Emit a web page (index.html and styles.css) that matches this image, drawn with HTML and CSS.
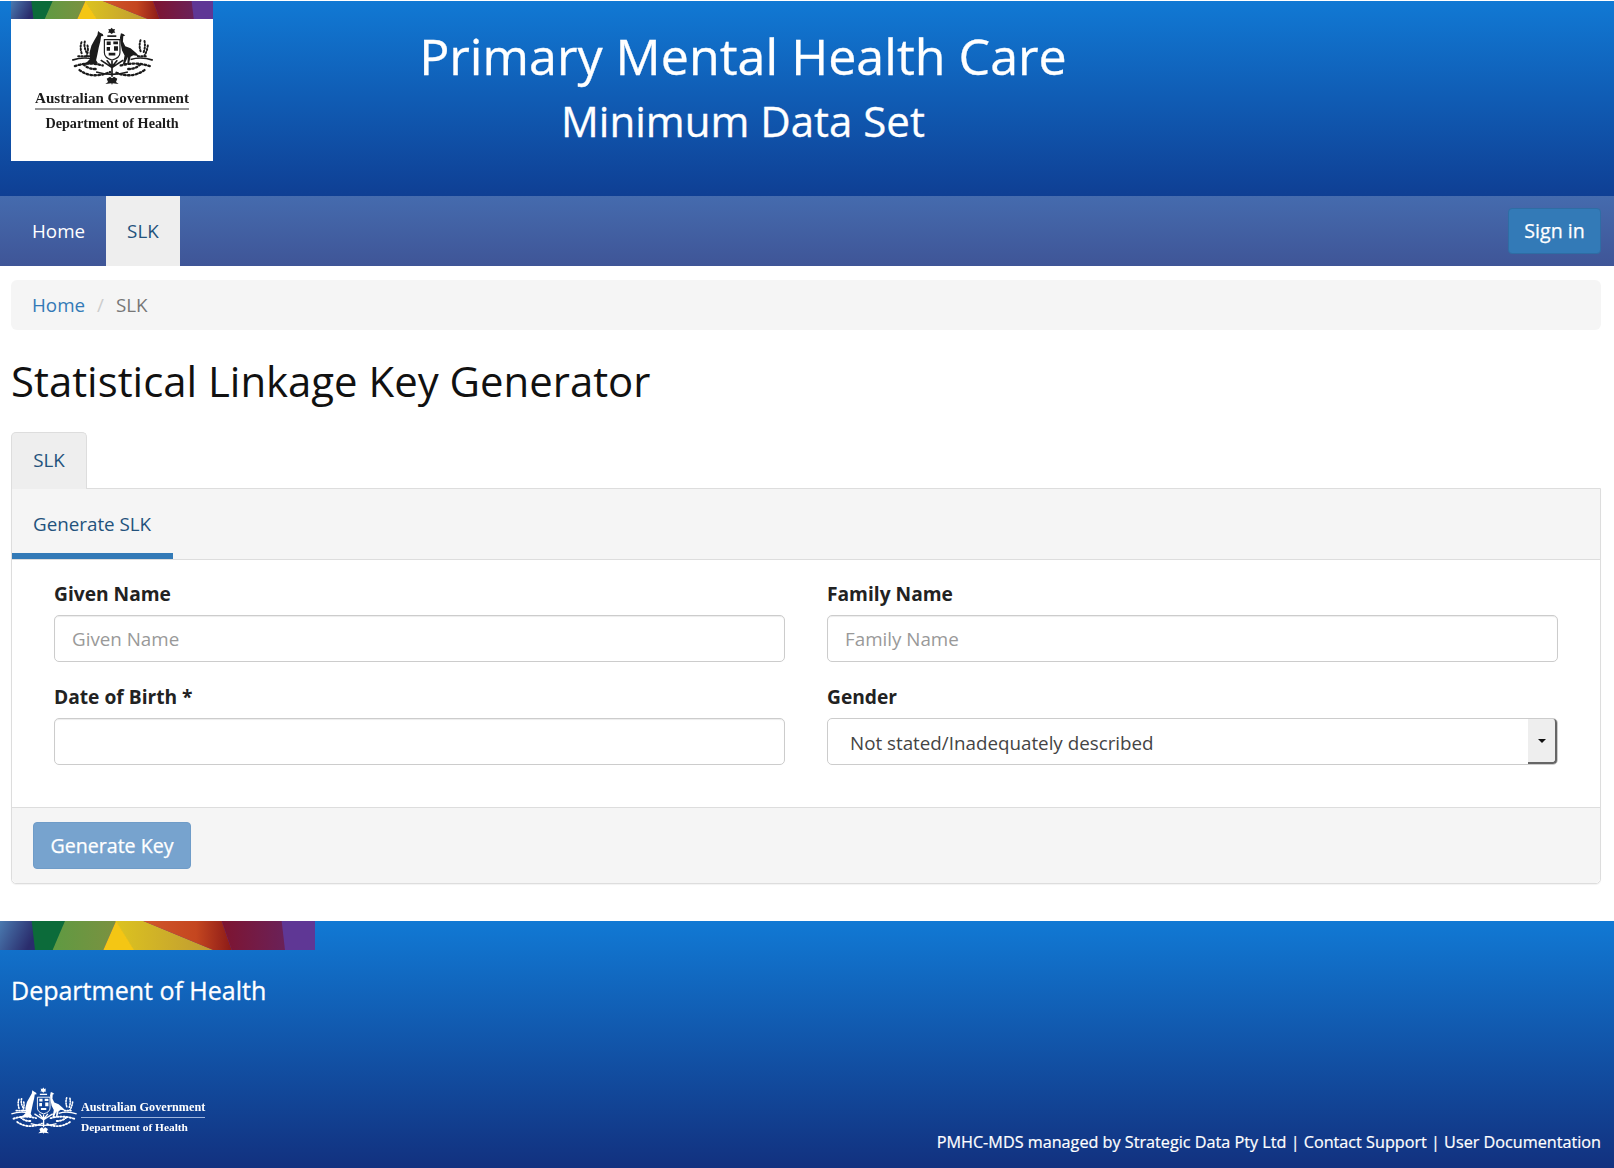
FILE: index.html
```html
<!DOCTYPE html>
<html lang="en">
<head>
<meta charset="utf-8">
<title>Statistical Linkage Key Generator</title>
<link rel="stylesheet" href="styles.css">
</head>
<body>
<svg class="defs" aria-hidden="true">
  <defs>
    <linearGradient id="g-blue" x1="0" y1="0" x2="1" y2="0.4"><stop offset="0" stop-color="#4a7ab0"/><stop offset="1" stop-color="#2a2c6c"/></linearGradient>
    <linearGradient id="g-lime" x1="0" y1="0" x2="1" y2="0"><stop offset="0" stop-color="#5f9a42"/><stop offset="1" stop-color="#7b9140"/></linearGradient>
    <linearGradient id="g-gold" x1="0" y1="0" x2="1" y2="0"><stop offset="0" stop-color="#dcc31f"/><stop offset="1" stop-color="#bf9a33"/></linearGradient>
    <linearGradient id="g-red" x1="0" y1="0" x2="1" y2="0"><stop offset="0" stop-color="#d2572a"/><stop offset="0.6" stop-color="#c4461f"/><stop offset="1" stop-color="#8c1a18"/></linearGradient>
    <linearGradient id="g-wine" x1="0" y1="0" x2="1" y2="0"><stop offset="0" stop-color="#7e1430"/><stop offset="1" stop-color="#6a2158"/></linearGradient>
    <symbol id="rainbow" viewBox="0 0 945 87" preserveAspectRatio="none">
      <rect width="945" height="87" fill="#5f3795"/>
      <polygon points="0,0 100,0 106,87 0,87" fill="url(#g-blue)"/>
      <polygon points="95,0 197,0 160,87 105,87" fill="#0c6b3a"/>
      <polygon points="195,0 348,0 310,87 158,87" fill="url(#g-lime)"/>
      <polygon points="346,0 430,0 640,87 400,87" fill="url(#g-gold)"/>
      <polygon points="348,0 402,87 310,87" fill="#f4c614"/>
      <polygon points="430,0 665,0 695,87 640,87" fill="url(#g-red)"/>
      <polygon points="665,0 845,0 855,87 695,87" fill="url(#g-wine)"/>
    </symbol>
    <symbol id="crest" viewBox="0 0 243 175">
      <path fill="currentColor" d="M78 12 84 17 92 21 94 27 87 28 85 42 80 62 76 82 72 100 78 110 62 112 44 113 18 116 44 106 54 96 52 78 58 56 68 38 76 24Z"/>
      <path fill="currentColor" d="M147 19 154 21 160 26 154 28 153 44 160 58 176 64 192 78 202 88 184 85 176 90 172 108 178 112 166 112 168 90 160 108 164 112 153 112 158 86 150 70 146 50 144 32Z"/>
      <path fill="currentColor" d="M119 2 123 7 129 6 127 12 130 17 124 17 119 21 114 17 108 17 111 12 109 6 115 7Z"/>
      <rect x="106" y="25" width="27" height="5" fill="currentColor"/>
      <path fill="none" stroke="currentColor" stroke-width="3.5" d="M97 38H144V78Q144 94 120 100 97 94 97 78Z"/>
      <path fill="currentColor" d="M104 44h12v10h-12zM124 44h14v8h-14zM104 60h10v12h-10zM126 58h12v14h-12zM110 78h20v8h-20z"/>
      <path fill="none" stroke="currentColor" stroke-width="6" stroke-linecap="round" stroke-dasharray="4 6" d="M28 46Q22 62 30 84M38 44Q34 60 44 78M46 56Q50 72 42 90M18 88H62M198 88H226M206 40Q200 58 208 78M218 42Q222 60 214 80M228 56Q226 72 218 86"/>
      <path fill="none" stroke="currentColor" stroke-width="5" d="M0 100Q36 88 66 98M176 98Q208 88 243 100"/>
      <path fill="none" stroke="currentColor" stroke-width="7" stroke-linecap="round" stroke-dasharray="5 7" d="M8 118Q46 104 92 116M234 118Q192 104 146 116M22 130Q60 158 114 136M218 130Q178 158 128 136M34 112Q50 130 78 126M206 112Q188 130 162 126"/>
      <path fill="none" stroke="currentColor" stroke-width="5" d="M86 100 120 122 154 100M104 100 120 120 136 100M120 102V150M72 136Q120 150 168 136"/>
      <path fill="currentColor" d="M104 156 114 150 120 155 126 150 136 156 132 166 140 172 122 170 120 175 118 170 100 172 108 166Z"/>
    </symbol>
  </defs>
</svg>

<header class="site-header">
  <div class="logo">
    <svg class="logo-strip"><use href="#rainbow"/></svg>
    <div class="logo-body">
      <svg class="logo-crest"><use href="#crest"/></svg>
      <div class="logo-gov">Australian Government</div>
      <div class="logo-dept">Department of Health</div>
    </div>
  </div>
  <div class="site-title">
    <div class="site-title-main">Primary Mental Health Care</div>
    <div class="site-title-sub">Minimum Data Set</div>
  </div>
</header>

<nav class="navbar">
  <a class="nav-item" href="#">Home</a>
  <a class="nav-item is-active" href="#">SLK</a>
  <a class="btn btn-signin" href="#">Sign in</a>
</nav>

<main class="content">
  <ol class="breadcrumb">
    <li><a href="#">Home</a></li>
    <li class="crumb-sep">/</li>
    <li class="crumb-current">SLK</li>
  </ol>

  <h1 class="page-title">Statistical Linkage Key Generator</h1>

  <div class="tabs"><a class="tab" href="#">SLK</a></div>

  <section class="panel">
    <div class="subtabs"><a class="subtab" href="#">Generate SLK</a></div>
    <form class="form-grid">
      <div class="field">
        <label class="field-label">Given Name</label>
        <input class="input" type="text" placeholder="Given Name">
      </div>
      <div class="field">
        <label class="field-label">Family Name</label>
        <input class="input" type="text" placeholder="Family Name">
      </div>
      <div class="field">
        <label class="field-label">Date of Birth *</label>
        <input class="input" type="text">
      </div>
      <div class="field">
        <label class="field-label">Gender</label>
        <div class="select">
          <span class="select-value">Not stated/Inadequately described</span>
          <span class="select-arrow"><span class="caret"></span></span>
        </div>
      </div>
    </form>
    <div class="panel-footer">
      <button class="btn btn-generate" type="button">Generate Key</button>
    </div>
  </section>
</main>

<footer class="site-footer">
  <svg class="footer-strip"><use href="#rainbow"/></svg>
  <div class="footer-dept">Department of Health</div>
  <div class="footer-bottom">
    <div class="footer-logo">
      <svg class="footer-crest"><use href="#crest"/></svg>
      <div class="footer-logo-text">
        <div class="footer-gov">Australian Government</div>
        <div class="footer-dept-small">Department of Health</div>
      </div>
    </div>
    <div class="footer-links">PMHC-MDS managed by Strategic Data Pty Ltd | Contact Support | User Documentation</div>
  </div>
</footer>
</body>
</html>
```

FILE: styles.css
```css
* { box-sizing: border-box; }
html, body { margin: 0; padding: 0; }
body {
  padding-top: 1px;
  background: #fff;
  color: #333;
  font-family: "Open Sans", "Noto Sans", sans-serif;
  font-size: 18.8px;
  line-height: 1.43;
}
a { text-decoration: none; color: #337ab7; }
.defs { display: block; width: 0; height: 0; overflow: hidden; }

/* Header */
.site-header {
  height: 195px;
  padding-left: 11px;
  display: flex;
  align-items: flex-start;
  background: linear-gradient(#1179d4, #0f3f94);
}
.logo { width: 202px; height: 160px; display: flex; flex-direction: column; background: #fff; }
.logo-strip { display: block; width: 202px; height: 18px; flex: none; }
.logo-body { flex: 1; display: flex; flex-direction: column; align-items: center; color: #1c1c1c; font-family: "Liberation Serif", serif; font-weight: 700; }
.logo-crest { display: block; width: 81px; height: 58px; margin-top: 8px; filter: blur(.45px); }
.logo-gov { font-size: 15.1px; line-height: 18px; margin-top: 4px; padding: 0 0 1px; border-bottom: 2px solid #999; white-space: nowrap; filter: blur(.3px); }
.logo-dept { font-size: 14.2px; line-height: 18px; margin-top: 4px; white-space: nowrap; filter: blur(.3px); }
.site-title { width: 1060px; text-align: center; color: #fff; -webkit-text-stroke: .3px #fff; }
.site-title-main { font-size: 50.2px; line-height: 64px; margin-top: 23px; }
.site-title-sub { font-size: 42px; line-height: 56px; margin-top: 5px; }

/* Navbar */
.navbar {
  height: 70px;
  padding: 0 13px 0 11px;
  display: flex;
  align-items: stretch;
  background: linear-gradient(#456bae, #3f5597);
}
.nav-item { display: flex; align-items: center; padding: 1px 21px 0; color: #fff; }
.nav-item.is-active { background: #eee; color: #23527c; }
.btn { border: 1px solid transparent; border-radius: 4px; color: #fff; font: inherit; font-size: 19.6px; display: inline-flex; align-items: center; justify-content: center; white-space: nowrap; -webkit-text-stroke: .25px #fff; }
.btn-signin { margin: 12px 0 12px auto; padding: 0; width: 93px; background: #337ab7; border-color: #2e6da4; }

/* Content */
.content { padding: 14px 13px 37px 11px; }
.breadcrumb { list-style: none; margin: 0; height: 50px; padding: 1px 21px 0; display: flex; align-items: center; gap: 12px; background: #f5f5f5; border-radius: 6px; }
.crumb-sep { color: #ccc; }
.crumb-current { color: #777; }
.page-title { margin: 25px 0 0; height: 77px; font-size: 41.9px; font-weight: 400; line-height: 52px; color: #111; }

.tabs { display: flex; height: 56px; }
.tab { width: 76px; height: 57px; padding-bottom: 2px; display: flex; align-items: center; justify-content: center; background: #eee; border: 1px solid #ddd; border-bottom: 0; border-radius: 5px 5px 0 0; color: #23527c; position: relative; z-index: 1; }

.panel { border: 1px solid #ddd; border-radius: 0 0 5px 5px; height: 396px; display: flex; flex-direction: column; box-shadow: 0 1px 1px rgba(0,0,0,.05); }
.subtabs { height: 71px; flex: none; background: #f5f5f5; border-bottom: 1px solid #ddd; }
.subtab { display: flex; align-items: center; width: 161px; height: 70px; padding-left: 21px; padding-top: 7px; border-bottom: 6px solid #337ab7; color: #23527c; }

.form-grid { flex: 1; padding: 21px 42px 0; display: grid; grid-template-columns: 1fr 1fr; column-gap: 42px; row-gap: 22px; align-content: start; }
.field { display: flex; flex-direction: column; }
.field-label { font-weight: 700; font-size: 19.2px; line-height: 25px; margin-bottom: 9px; color: #222; }
.input { width: 100%; height: 47px; padding: 0 17px; border: 1px solid #ccc; border-radius: 5px; font: inherit; color: #555; background: #fff; box-shadow: inset 0 1px 1px rgba(0,0,0,.075); }
.input::placeholder { color: #999; opacity: 1; }
.select { height: 47px; display: flex; align-items: stretch; border: 1px solid #ccc; border-radius: 5px; color: #444; background: #fff; }
.select-value { flex: 1; display: flex; align-items: center; padding: 3px 0 0 22px; }
.select-arrow { width: 29px; display: flex; align-items: center; justify-content: center; background: #eee; border-right: 2px solid #666; border-bottom: 2px solid #666; border-radius: 0 4px 4px 0; }
.caret { width: 0; height: 0; border-left: 4px solid transparent; border-right: 4px solid transparent; border-top: 4px solid #111; }

.panel-footer { height: 76px; flex: none; padding: 14px 21px 0; background: #f5f5f5; border-top: 1px solid #ddd; border-radius: 0 0 5px 5px; }
.btn-generate { width: 158px; height: 47px; padding: 2px 0 0; background: #77a3ce; border-color: #6f9cc8; }

/* Footer */
.site-footer { height: 247px; display: flex; flex-direction: column; background: linear-gradient(#1179d4, #12317f); color: #fff; }
.footer-strip { display: block; width: 315px; height: 29px; flex: none; }
.footer-dept { font-size: 25px; line-height: 34px; margin: 23px 0 0 11px; -webkit-text-stroke: .3px #fff; }
.footer-bottom { margin-top: auto; padding: 0 13px 0 11px; display: flex; justify-content: space-between; align-items: flex-end; }
.footer-logo { display: flex; align-items: flex-start; gap: 4px; margin-bottom: 33px; }
.footer-crest { display: block; width: 66px; height: 47px; filter: blur(.4px); }
.footer-logo-text { margin-top: 13px; font-family: "Liberation Serif", serif; font-weight: 700; white-space: nowrap; filter: blur(.3px); }
.footer-gov { font-size: 12.2px; line-height: 15px; border-bottom: 1px solid #9db4dc; padding-bottom: 2px; }
.footer-dept-small { font-size: 11.4px; line-height: 16px; margin-top: 1px; }
.footer-links { font-size: 16.2px; line-height: 24px; padding-bottom: 14px; white-space: nowrap; -webkit-text-stroke: .2px #fff; }
```
